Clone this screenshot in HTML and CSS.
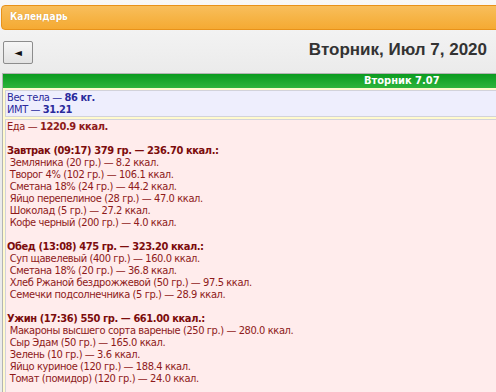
FILE: index.html
```html
<!DOCTYPE html>
<html lang="ru">
<head>
    <meta charset="UTF-8">
    <title>Календарь</title>
    <link rel="stylesheet" href="styles.css">
</head>
<body>
    <div class="topbar">Календарь</div>
    <div class="daybar">
        <button class="prev">&#9668;</button>
        <h1>Вторник, Июл 7, 2020</h1>
    </div>
    <div class="day">
        <div class="day-head"><span>Вторник 7.07</span></div>
        <div class="cells">
            <div class="cell weight">
                Вес тела — <b>86 кг.</b><br>
                ИМТ — <b>31.21</b>
            </div>
            <div class="cell food">
                Еда — <b>1220.9 ккал.</b><br>
                <br>
                <b class="meal">Завтрак (09:17) 379 гр. — 236.70 ккал.:</b><br>
                &nbsp;Земляника (20 гр.) — 8.2 ккал.<br>
                &nbsp;Творог 4% (102 гр.) — 106.1 ккал.<br>
                &nbsp;Сметана 18% (24 гр.) — 44.2 ккал.<br>
                &nbsp;Яйцо перепелиное (28 гр.) — 47.0 ккал.<br>
                &nbsp;Шоколад (5 гр.) — 27.2 ккал.<br>
                &nbsp;Кофе черный (200 гр.) — 4.0 ккал.<br>
                <br>
                <b class="meal">Обед (13:08) 475 гр. — 323.20 ккал.:</b><br>
                &nbsp;Суп щавелевый (400 гр.) — 160.0 ккал.<br>
                &nbsp;Сметана 18% (20 гр.) — 36.8 ккал.<br>
                &nbsp;Хлеб Ржаной бездрожжевой (50 гр.) — 97.5 ккал.<br>
                &nbsp;Семечки подсолнечника (5 гр.) — 28.9 ккал.<br>
                <br>
                <b class="meal">Ужин (17:36) 550 гр. — 661.00 ккал.:</b><br>
                &nbsp;Макароны высшего сорта вареные (250 гр.) — 280.0 ккал.<br>
                &nbsp;Сыр Эдам (50 гр.) — 165.0 ккал.<br>
                &nbsp;Зелень (10 гр.) — 3.6 ккал.<br>
                &nbsp;Яйцо куриное (120 гр.) — 188.4 ккал.<br>
                &nbsp;Томат (помидор) (120 гр.) — 24.0 ккал.<br>
                <br>
                <br>
            </div>
        </div>
    </div>
</body>
</html>
```

FILE: styles.css
```css
html, body {
    margin: 0;
    padding: 0;
    overflow: hidden;
}
body {
    font-family: 'DejaVu Sans Condensed', 'DejaVu Sans', sans-serif;
    font-size: 11px;
    line-height: 12px;
    background: linear-gradient(#f8f8f8, #ebebeb 72px, #ebebeb);
    color: #333;
}
.topbar {
    margin: 5px -10px 0 1px;
    height: 23px;
    line-height: 22px;
    padding-left: 8px;
    border: 1px solid #e8921a;
    border-radius: 4px;
    background: linear-gradient(#f8be5c, #f6b446 50%, #f5aa33);
    color: white;
    font-size: 10px;
    font-weight: bold;
    text-shadow: 0 0 1px rgba(140, 80, 0, 0.4);
}
.daybar {
    display: flex;
    align-items: center;
    justify-content: space-between;
    height: 43px;
    padding: 0 9px 0 3px;
}
.prev {
    width: 30px;
    height: 23px;
    margin-top: 1px;
    padding: 0;
    border: 1px solid #8c8c8c;
    border-radius: 2px;
    background: linear-gradient(#f6f6f6, #e2e2e2);
    color: #111;
    font-size: 10px;
    line-height: 21px;
    font-family: 'DejaVu Sans', sans-serif;
}
h1 {
    margin: 0;
    margin-top: -3px;
    font-family: 'Liberation Sans', Arial, sans-serif;
    font-size: 17px;
    font-weight: bold;
    color: #333;
}
.day {
    margin-left: 2px;
    border-top: 1px solid #b4b4b4;
    border-left: 1px solid #b4b4b4;
    background: #fffacd;
}
.day-head {
    height: 14px;
    line-height: 14px;
    background: linear-gradient(#0b9b20, #2db43c);
    color: white;
    font-weight: bold;
    padding-left: 361px;
}
.cells {
    display: flex;
    flex-direction: column;
    gap: 2px;
    padding: 2px 0 0 2px;
}
.cell {
    border: 1px solid #d2d2da;
    border-right: none;
    padding: 1px 0 0 1px;
    letter-spacing: -0.4px;
}
.weight {
    background: #eeeefd;
    color: #2a2a9c;
    height: 24px;
}
.food {
    background: #ffecec;
    color: #8e1a1a;
    white-space: nowrap;
}
.meal {
    color: #7c0c0c;
}
```
